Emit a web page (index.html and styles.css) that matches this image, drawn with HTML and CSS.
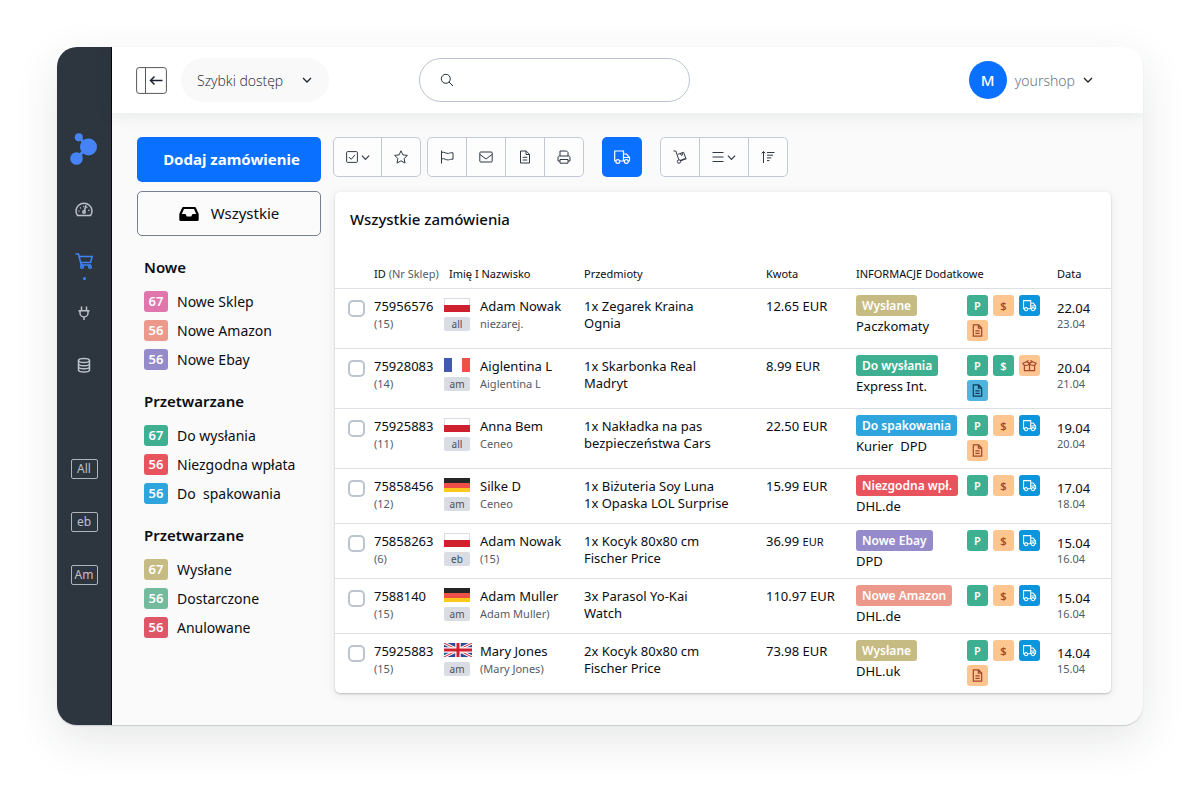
FILE: index.html
```html
<!DOCTYPE html>
<html lang="pl">
<head>
<meta charset="utf-8">
<meta name="viewport" content="width=device-width, initial-scale=1">
<title>Wszystkie zamówienia</title>
<link rel="stylesheet" href="styles.css">
</head>
<body>
<svg class="sprite" aria-hidden="true">
  <symbol id="i-chevron" viewBox="0 0 10 10"><path d="M1 3l4 4 4-4"/></symbol>
  <symbol id="i-truck" viewBox="0 0 18 16"><path d="M3 12H1.700V2H10.500v10H6.600M10.500 5h3L16.500 8.500V12h-1.300M10.500 12h.900M10.500 8.500h6"/><circle cx="4.800" cy="12.500" r="1.900"/><circle cx="13.300" cy="12.500" r="1.900"/></symbol>
  <symbol id="i-doc" viewBox="0 0 12 14"><path d="M1.500 1h5.700l3.300 3.300V13h-9zM7 1v3.500h3.500M3.700 7.300h4.600M3.700 10h4.600"/></symbol>
  <symbol id="i-box" viewBox="0 0 16 14"><path d="M2.500 6.500V12.500h11V6.500M4.500 3L8 4.500 11.500 3 15 4.500 13.500 7 9.500 6.500 8 4.500 6.500 6.500 2.500 7 1 4.500zM8 4.500v8M4.500 3L7 1.500M11.500 3L9 1.500"/></symbol>
  <symbol id="f-pl" viewBox="0 0 26 14"><path fill="#fff" d="M0 0h26v14H0z"/><path fill="#d0202f" d="M0 7h26v7H0z"/><path fill="none" stroke="#d9dbe3" d="M.5 7V.5h25V7"/></symbol>
  <symbol id="f-fr" viewBox="0 0 26 14"><path fill="#fff" d="M0 0h26v14H0z"/><path fill="#4159b0" d="M0 0h8v14H0z"/><path fill="#f04f4b" d="M18 0h8v14h-8z"/></symbol>
  <symbol id="f-de" viewBox="0 0 26 14"><path fill="#262626" d="M0 0h26v5H0z"/><path fill="#ef4f49" d="M0 5h26v5H0z"/><path fill="#fbc91b" d="M0 10h26v4H0z"/></symbol>
  <symbol id="f-uk" viewBox="0 0 28 14"><path fill="#2c4a98" d="M0 0h28v14H0z"/><path stroke="#fff" stroke-width="3" d="M0 0l28 14M28 0L0 14"/><path stroke="#d0202f" stroke-width="1" d="M0 0l28 14M28 0L0 14"/><path stroke="#fff" stroke-width="5.500" d="M14 0v14M0 7h28"/><path stroke="#d0202f" stroke-width="3" d="M14 0v14M0 7h28"/></symbol>
</svg>

<div class="window">
  <nav class="rail" aria-label="Menu główne">
    <a class="rail-logo" href="#" aria-label="Strona główna"><svg viewBox="0 0 28 32"><path d="M9 4.500l9 9L6.500 25.500" fill="none" stroke="#4583f7" stroke-width="3"/><circle cx="8.800" cy="4.200" r="4"/><circle cx="18.500" cy="14" r="8.500"/><circle cx="6.500" cy="25.500" r="6.300"/></svg></a>
    <div class="rail-icons">
      <a href="#" aria-label="Pulpit"><svg viewBox="0 0 24 24"><path d="M5.500 18.500A8 7.700 0 1 1 18.500 18.500z"/><path d="M12.300 14.300l1.700-6"/><circle cx="12" cy="15" r="1.200"/><path stroke-dasharray="1 2.400" d="M7 14.500a5 5 0 0 1 10 0"/></svg></a>
      <a href="#" class="active" aria-label="Zamówienia"><svg viewBox="0 0 24 24"><path d="M3.500 5h3l2.700 11H19M7.200 7.500h13l-1.600 6H8.500"/><circle cx="10" cy="18" r="1.300"/><circle cx="18" cy="18" r="1.300"/></svg></a>
      <a href="#" aria-label="Integracje"><svg viewBox="0 0 24 24"><path d="M9.500 5.500v4M14.500 5.500v4M6.500 9.700h11M8 9.700v2.300a4 4 0 0 0 8 0V9.700M12 16v3"/></svg></a>
      <a href="#" aria-label="Magazyn"><svg viewBox="0 0 24 24"><ellipse cx="12" cy="7.500" rx="5.500" ry="2"/><path d="M6.500 7.500v9.500c0 2.700 11 2.700 11 0V7.500M6.500 10.700c0 2.700 11 2.700 11 0M6.500 13.800c0 2.700 11 2.700 11 0"/></svg></a>
    </div>
    <div class="rail-tags">
      <a href="#">All</a>
      <a href="#">eb</a>
      <a href="#">Am</a>
    </div>
  </nav>

  <div class="page">
    <header class="topbar">
      <button class="toggle" type="button" aria-label="Zwiń menu"><svg viewBox="0 0 31 27"><rect x=".6" y=".6" width="29.800" height="25.800" rx="2.500"/><path d="M9.500 1v25"/><path class="arrow" d="M26.500 13.500h-12M18.500 9.500l-4 4 4 4"/></svg></button>
      <button class="quick" type="button">Szybki dostęp<svg class="chev"><use href="#i-chevron"/></svg></button>
      <label class="search"><svg viewBox="0 0 14 14"><circle cx="5.800" cy="5.800" r="4.500"/><path d="M9 9l4 4"/></svg><input type="search" aria-label="Szukaj"></label>
      <button class="account" type="button"><span class="avatar">M</span>yourshop<svg class="chev"><use href="#i-chevron"/></svg></button>
    </header>

    <div class="content">
      <aside class="side">
        <button class="btn add" type="button">Dodaj zamówienie</button>
        <button class="btn all" type="button"><svg viewBox="0 0 20 14"><path fill-rule="evenodd" d="M4.300 0h11.400q.8 0 1.200.8L19.700 7v5.500q0 1.500-1.500 1.500H1.800Q.3 14 .3 12.500V7L3.100.8Q3.500 0 4.300 0zM5 2L2.800 7h3.700l1.300 2.500h4.400L13.500 7h3.700L15 2z"/></svg>Wszystkie</button>
        <section class="group">
          <h2>Nowe</h2>
          <ul>
            <li><a href="#"><b class="pink">67</b>Nowe Sklep</a></li>
            <li><a href="#"><b class="salmon">56</b>Nowe Amazon</a></li>
            <li><a href="#"><b class="violet">56</b>Nowe Ebay</a></li>
          </ul>
        </section>
        <section class="group">
          <h2>Przetwarzane</h2>
          <ul>
            <li><a href="#"><b class="green">67</b>Do wysłania</a></li>
            <li><a href="#"><b class="red">56</b>Niezgodna wpłata</a></li>
            <li><a href="#"><b class="blue">56</b>Do&nbsp; spakowania</a></li>
          </ul>
        </section>
        <section class="group">
          <h2>Przetwarzane</h2>
          <ul>
            <li><a href="#"><b class="khaki">67</b>Wysłane</a></li>
            <li><a href="#"><b class="mint">56</b>Dostarczone</a></li>
            <li><a href="#"><b class="crimson">56</b>Anulowane</a></li>
          </ul>
        </section>
      </aside>

      <main class="orders">
        <div class="toolbar">
          <div class="tools">
            <button class="wide" type="button" aria-label="Zaznacz"><svg viewBox="0 0 12 12"><rect x=".6" y=".6" width="10.800" height="10.800" rx="1"/><path d="M3 6l2.200 2.300L9 3.800"/></svg><svg class="chev"><use href="#i-chevron"/></svg></button>
            <button type="button" aria-label="Gwiazdka"><svg class="i14" viewBox="0 0 14 14"><path d="M7 .8l1.900 4.100 4.500.5-3.300 3.100.9 4.600L7 10.800l-4 2.300.9-4.600L.6 5.400l4.500-.5z"/></svg></button>
          </div>
          <div class="tools">
            <button type="button" aria-label="Flaga"><svg class="i14" viewBox="0 0 14 14"><path d="M1.500.5v13M1.500 2.500c3-1.300 4.500 1.500 7 .9 1.500-.4 2.700-.9 4.500-.6v6.500c-1.800-.3-3 .2-4.500.6-2.500.6-4-2.200-7-.9"/></svg></button>
            <button type="button" aria-label="Wiadomość"><svg class="i14" viewBox="0 0 14 14"><rect x=".8" y="2" width="12.400" height="10" rx="1"/><path d="M1 4.500l6 4.500 6-4.500"/></svg></button>
            <button type="button" aria-label="Dokument"><svg class="i14"><use href="#i-doc"/></svg></button>
            <button type="button" aria-label="Drukuj"><svg class="i14" viewBox="0 0 14 14"><path d="M3 6V1h6.500L11 2.500V6M3 11H1V7.500Q1 6 2.500 6h9Q13 6 13 7.500V11h-2M3 9.500h8v3.700H3z"/></svg></button>
          </div>
          <button class="ship" type="button" aria-label="Wyślij"><svg><use href="#i-truck"/></svg></button>
          <div class="tools">
            <button type="button" aria-label="Wózek"><svg class="i14" viewBox="0 0 14 14"><path d="M.5 1h2.300l3 8.700M7.500 10.900l6-2.200M4.800 4.300l5.800-2 2.200 6-5.800 2.200M7.400 3.400l.8 2 1.500-.6-.7-2"/><circle cx="6" cy="11.500" r="1.700"/></svg></button>
            <button class="wide" type="button" aria-label="Lista"><svg viewBox="0 0 12 12"><path d="M.5 1.500h11M.5 6h11M.5 10.500h11"/></svg><svg class="chev"><use href="#i-chevron"/></svg></button>
            <button type="button" aria-label="Sortuj"><svg class="i14" viewBox="0 0 14 14"><path d="M2.500 13V1.500M.7 3.300l1.800-1.800 1.800 1.800M6 2.500h7.500M6 5.200h6M6 7.900h4.300M6 10.600h2.500"/></svg></button>
          </div>
        </div>

        <section class="card">
          <h1>Wszystkie zamówienia</h1>
          <table>
            <colgroup><col class="c-check"><col class="c-id"><col class="c-flag"><col class="c-name"><col><col class="c-sum"><col class="c-info"><col class="c-icons"><col class="c-date"></colgroup>
            <thead>
              <tr><th></th><th scope="col">ID <span>(Nr Sklep)</span></th><th scope="col" colspan="2" class="inset">Imię I Nazwisko</th><th scope="col">Przedmioty</th><th scope="col">Kwota</th><th scope="col" colspan="2">INFORMACJE Dodatkowe</th><th scope="col">Data</th></tr>
            </thead>
            <tbody>
              <tr>
                <td class="check"><input type="checkbox" aria-label="75956576"></td>
                <td>75956576<small>(15)</small></td>
                <td><svg class="flag"><use href="#f-pl"/></svg><span class="src">all</span></td>
                <td>Adam Nowak<small>niezarej.</small></td>
                <td>1x Zegarek Kraina<br>Ognia</td>
                <td>12.65 EUR</td>
                <td class="info"><b class="khaki">Wysłane</b><div>Paczkomaty</div></td>
                <td class="marks"><div><i class="green">P</i><i class="peach">$</i><i class="azure"><svg><use href="#i-truck"/></svg></i><i class="peach"><svg><use href="#i-doc"/></svg></i></div></td>
                <td class="date">22.04<small>23.04</small></td>
              </tr>
              <tr>
                <td class="check"><input type="checkbox" aria-label="75928083"></td>
                <td>75928083<small>(14)</small></td>
                <td><svg class="flag"><use href="#f-fr"/></svg><span class="src">am</span></td>
                <td>Aiglentina L<small>Aiglentina L</small></td>
                <td>1x Skarbonka Real<br>Madryt</td>
                <td>8.99 EUR</td>
                <td class="info"><b class="green">Do wysłania</b><div>Express Int.</div></td>
                <td class="marks"><div><i class="green">P</i><i class="green">$</i><i class="peach"><svg><use href="#i-box"/></svg></i><i class="sky"><svg><use href="#i-doc"/></svg></i></div></td>
                <td class="date">20.04<small>21.04</small></td>
              </tr>
              <tr>
                <td class="check"><input type="checkbox" aria-label="75925883"></td>
                <td>75925883<small>(11)</small></td>
                <td><svg class="flag"><use href="#f-pl"/></svg><span class="src">all</span></td>
                <td>Anna Bem<small>Ceneo</small></td>
                <td>1x Nakładka na pas<br>bezpieczeństwa Cars</td>
                <td>22.50 EUR</td>
                <td class="info"><b class="blue">Do spakowania</b><div>Kurier&nbsp; DPD</div></td>
                <td class="marks"><div><i class="green">P</i><i class="peach">$</i><i class="azure"><svg><use href="#i-truck"/></svg></i><i class="peach"><svg><use href="#i-doc"/></svg></i></div></td>
                <td class="date">19.04<small>20.04</small></td>
              </tr>
              <tr>
                <td class="check"><input type="checkbox" aria-label="75858456"></td>
                <td>75858456<small>(12)</small></td>
                <td><svg class="flag"><use href="#f-de"/></svg><span class="src">am</span></td>
                <td>Silke D<small>Ceneo</small></td>
                <td>1x Biżuteria Soy Luna<br>1x Opaska LOL Surprise</td>
                <td>15.99 EUR</td>
                <td class="info"><b class="red">Niezgodna wpł.</b><div>DHL.de</div></td>
                <td class="marks"><div><i class="green">P</i><i class="peach">$</i><i class="azure"><svg><use href="#i-truck"/></svg></i></div></td>
                <td class="date">17.04<small>18.04</small></td>
              </tr>
              <tr>
                <td class="check"><input type="checkbox" aria-label="75858263"></td>
                <td>75858263<small>(6)</small></td>
                <td><svg class="flag"><use href="#f-pl"/></svg><span class="src">eb</span></td>
                <td>Adam Nowak<small>(15)</small></td>
                <td>1x Kocyk 80x80 cm<br>Fischer Price</td>
                <td>36.99 <span class="cur">EUR</span></td>
                <td class="info"><b class="violet">Nowe Ebay</b><div>DPD</div></td>
                <td class="marks"><div><i class="green">P</i><i class="peach">$</i><i class="azure"><svg><use href="#i-truck"/></svg></i></div></td>
                <td class="date">15.04<small>16.04</small></td>
              </tr>
              <tr>
                <td class="check"><input type="checkbox" aria-label="7588140"></td>
                <td>7588140<small>(15)</small></td>
                <td><svg class="flag"><use href="#f-de"/></svg><span class="src">am</span></td>
                <td>Adam Muller<small>Adam Muller)</small></td>
                <td>3x Parasol Yo-Kai<br>Watch</td>
                <td>110.97 EUR</td>
                <td class="info"><b class="salmon">Nowe Amazon</b><div>DHL.de</div></td>
                <td class="marks"><div><i class="green">P</i><i class="peach">$</i><i class="azure"><svg><use href="#i-truck"/></svg></i></div></td>
                <td class="date">15.04<small>16.04</small></td>
              </tr>
              <tr>
                <td class="check"><input type="checkbox" aria-label="75925883, Mary Jones"></td>
                <td>75925883<small>(15)</small></td>
                <td><svg class="flag uk"><use href="#f-uk"/></svg><span class="src">am</span></td>
                <td>Mary Jones<small>(Mary Jones)</small></td>
                <td>2x Kocyk 80x80 cm<br>Fischer Price</td>
                <td>73.98 EUR</td>
                <td class="info"><b class="khaki">Wysłane</b><div>DHL.uk</div></td>
                <td class="marks"><div><i class="green">P</i><i class="peach">$</i><i class="azure"><svg><use href="#i-truck"/></svg></i><i class="peach"><svg><use href="#i-doc"/></svg></i></div></td>
                <td class="date">14.04<small>15.04</small></td>
              </tr>
            </tbody>
          </table>
        </section>
      </main>
    </div>
  </div>
</div>
</body>
</html>
```
FILE: styles.css
```css
* { box-sizing: border-box; }

body {
  margin: 0;
  padding: 47px 57px 68px;
  background: #fff;
  color: #0b0d12;
  font-family: "Noto Sans", "Open Sans", sans-serif;
  font-size: 13px;
  line-height: 17px;
}

button, input { font: inherit; color: inherit; margin: 0; }
button { cursor: pointer; border: 0; padding: 0; background: none; }
a { color: inherit; text-decoration: none; }
h1, h2, ul { margin: 0; padding: 0; }
ul { list-style: none; }
svg { display: block; fill: none; stroke: currentColor; flex: none; }
.sprite { position: absolute; width: 0; height: 0; }
.chev { width: 10px; height: 10px; stroke-width: 1.3; }

/* Status colours */
.pink { background: #e076ac; }
.salmon { background: #ec998c; }
.violet { background: #958aca; }
.green { background: #3eb091; }
.red { background: #e9535d; }
.blue { background: #2fa5dd; }
.khaki { background: #c6bb82; }
.mint { background: #74bb9d; }
.crimson { background: #df5767; }
.azure { background: #0b95dc; }
.peach { background: #fdc590; }
.sky { background: #4fb5de; }

/* Window */
.window {
  display: flex;
  border-radius: 20px;
  background: #fafafa;
  box-shadow: 0 1px 1px rgba(40, 50, 60, .18), 0 14px 44px rgba(40, 50, 60, .12);
  overflow: hidden;
}

/* Left rail */
.rail {
  flex: none;
  width: 55px;
  padding-top: 86px;
  border-right: 1px solid #06080a;
  background: #2d363f;
  color: #bcc2ca;
  display: flex;
  flex-direction: column;
  align-items: center;
}
.rail-logo svg { width: 28px; height: 32px; fill: #4583f7; stroke: none; }
.rail-icons {
  display: flex;
  flex-direction: column;
  gap: 28px;
  padding-top: 32px;
}
.rail-icons a { position: relative; }
.rail-icons svg { width: 24px; height: 24px; stroke-width: 1.5; }
.rail-icons .active { color: #3d85f8; }
.rail-icons .active::after {
  content: "";
  position: absolute;
  left: 11px;
  top: 28px;
  width: 3px;
  height: 3px;
  border-radius: 50%;
  background: #3d85f8;
}
.rail-tags {
  display: flex;
  flex-direction: column;
  gap: 33px;
  padding-top: 82px;
}
.rail-tags a {
  width: 27px;
  height: 20px;
  border: 1px solid #aeb4bc;
  border-radius: 2px;
  font-size: 12px;
  line-height: 18px;
  text-align: center;
}

/* Top bar */
.page { flex: 1; min-width: 0; }
.topbar {
  display: flex;
  align-items: center;
  height: 66px;
  padding: 0 50px 0 24px;
  background: #fff;
  box-shadow: 0 2px 16px rgba(40, 60, 60, .1);
}
.toggle svg { width: 31px; height: 27px; stroke: #55585d; }
.toggle .arrow { stroke: #1a2230; stroke-width: 1.5; }
.quick {
  display: flex;
  align-items: center;
  gap: 19px;
  height: 44px;
  margin-left: 14px;
  padding: 0 17px 0 16px;
  border-radius: 22px;
  background: #f9f9f9;
  color: #1f2530;
  font-family: "Open Sans", sans-serif;
  font-size: 14px;
  font-weight: 300;
}
.search {
  display: flex;
  align-items: center;
  gap: 12px;
  width: 271px;
  height: 44px;
  margin-left: 90px;
  padding: 0 20px;
  border: 1px solid #bcc2d0;
  border-radius: 22px;
}
.search svg { width: 14px; height: 14px; stroke: #222b38; }
.search input {
  flex: 1;
  min-width: 0;
  border: 0;
  outline: 0;
  background: none;
}
.account {
  display: flex;
  align-items: center;
  gap: 8px;
  margin-left: auto;
  color: #6b7380;
  font-size: 14px;
  font-weight: 300;
}
.account .chev { color: #1b222c; }
.avatar {
  width: 38px;
  height: 38px;
  border-radius: 50%;
  background: #0a70ff;
  color: #fff;
  font-size: 15px;
  font-weight: 500;
  line-height: 38px;
  text-align: center;
}

/* Content */
.content {
  display: flex;
  gap: 12px;
  padding: 24px 32px 32px 25px;
}

/* Status menu */
.side { flex: none; width: 184px; }
.btn {
  display: flex;
  align-items: center;
  justify-content: center;
  gap: 12px;
  width: 100%;
  height: 45px;
  border-radius: 5px;
  font-size: 15px;
}
.add { padding: 0 0 1px 5px; background: #0a70ff; color: #fff; font-weight: 700; }
.all { margin: 9px 0 19px; border: 1px solid #777f91; background: #fbfbfb; }
.all svg { width: 20px; height: 14px; fill: #000; stroke: none; }
.group { padding: 0 7px; margin-bottom: 19px; }
.group h2 {
  margin-bottom: 12px;
  font-size: 15px;
  font-weight: 600;
  line-height: 24px;
}
.group ul { display: grid; gap: 8px; }
.group a {
  display: flex;
  align-items: center;
  gap: 9px;
  font-size: 14px;
  line-height: 21px;
}
.group b {
  width: 24px;
  border-radius: 3px;
  color: #fff;
  font-size: 13px;
  font-weight: 600;
  text-align: center;
}

/* Toolbar */
.orders { flex: 1; min-width: 0; }
.toolbar { display: flex; gap: 18px; margin-bottom: 15px; }
.tools {
  display: flex;
  border: 1px solid #c3c8d6;
  border-radius: 5px;
  background: #fdfdfd;
  color: #303844;
}
.tools:first-child { margin-right: -12px; }
.tools button {
  display: flex;
  align-items: center;
  justify-content: center;
  gap: 3px;
  width: 38px;
  height: 38px;
}
.tools button + button { width: 39px; border-left: 1px solid #c3c8d6; }
.tools .wide { width: 47px; }
.tools button + .wide { width: 49px; }
.tools svg { width: 12px; height: 12px; }
.tools .i14 { width: 14px; height: 14px; }
.tools .chev { width: 9px; height: 9px; }
.ship {
  display: flex;
  align-items: center;
  justify-content: center;
  width: 40px;
  height: 40px;
  border-radius: 5px;
  background: #0a70ff;
  color: #fff;
}
.ship svg { width: 18px; height: 16px; stroke-width: 1.2; }

/* Orders card */
.card {
  margin-left: 2px;
  border-radius: 5px;
  background: #fff;
  box-shadow: 0 1px 2px rgba(30, 40, 50, .25), 0 2px 12px rgba(30, 40, 50, .08);
}
.card h1 {
  padding: 15px 15px 0;
  font-size: 15px;
  font-weight: 500;
  line-height: 24px;
}
table { width: 100%; table-layout: fixed; border-collapse: collapse; }
.c-check { width: 39px; }
.c-id { width: 70px; }
.c-flag { width: 36px; }
.c-name { width: 104px; }
.c-sum { width: 90px; }
.c-info { width: 111px; }
.c-icons { width: 90px; }
.c-date { width: 54px; }
th {
  height: 57px;
  padding: 34px 0 0;
  font-size: 11px;
  font-weight: 400;
  text-align: left;
  vertical-align: top;
  white-space: nowrap;
}
th span { color: #545b66; }
th.inset { padding-left: 5px; }
td {
  height: 55px;
  padding: 9px 0 0;
  border-top: 1px solid #dcdfe4;
  vertical-align: top;
  white-space: nowrap;
}
td small {
  display: block;
  color: #545b66;
  font-size: 11px;
}
.check { padding: 11px 0 0 13px; }
.check input {
  display: block;
  appearance: none;
  width: 17px;
  height: 17px;
  border: 2px solid #bcc4ce;
  border-radius: 5px;
  background: #fff;
}
.check input:checked { background: #0a70ff; }
.flag { width: 26px; height: 14px; stroke: none; }
.flag.uk { width: 28px; }
.src {
  display: block;
  width: 26px;
  margin-top: 5px;
  border-radius: 2px;
  background: #d9dce3;
  color: #49505c;
  font-size: 10px;
  line-height: 14px;
  text-align: center;
}
.cur { font-size: 11px; }
.info { padding-top: 6px; }
.info b {
  display: inline-block;
  padding: 0 6px;
  border-radius: 3px;
  color: #fff;
  font-size: 12px;
  font-weight: 600;
  line-height: 21px;
  vertical-align: top;
}
.info div { line-height: 20px; }
.marks { padding: 6px 0 7px; }
.marks div { display: flex; flex-wrap: wrap; gap: 4px 5px; padding-right: 8px; }
.marks i {
  display: flex;
  align-items: center;
  justify-content: center;
  width: 21px;
  height: 21px;
  border-radius: 3px;
  color: #fff;
  font-size: 11px;
  font-style: normal;
  font-weight: 600;
}
.marks svg { width: 15px; height: 13px; stroke-width: 1.3; }
.marks .peach { color: #a4472c; }
.marks .sky { color: #123c5a; }
.date { padding-top: 11px; }
.date small { line-height: 14px; }
```
